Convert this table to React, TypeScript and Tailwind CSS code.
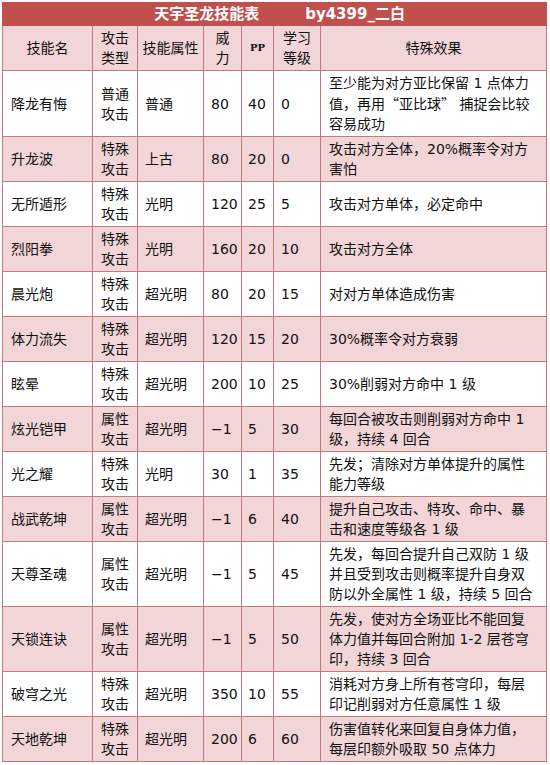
const cjk = (t: string) => <span className="[font-family:'Noto_Sans_CJK_SC',sans-serif]">{t}</span>;

const skills = [
  { name: '降龙有悔', type: '普通', attr: '普通', power: '80', pp: '40', lv: '0', effect: ['至少能为对方亚比保留 1 点体力', <>值，再用{cjk('“')}亚比球{cjk('”')} 捕捉会比较</>, '容易成功'], h: 'h-[66px]' },
  { name: '升龙波', type: '特殊', attr: '上古', power: '80', pp: '20', lv: '0', effect: ['攻击对方全体，20%概率令对方', '害怕'], h: 'h-[45px]' },
  { name: '无所遁形', type: '特殊', attr: '光明', power: '120', pp: '25', lv: '5', effect: ['攻击对方单体，必定命中'], h: 'h-[45px]' },
  { name: '烈阳拳', type: '特殊', attr: '光明', power: '160', pp: '20', lv: '10', effect: ['攻击对方全体'], h: 'h-[45px]' },
  { name: '晨光炮', type: '特殊', attr: '超光明', power: '80', pp: '20', lv: '15', effect: ['对对方单体造成伤害'], h: 'h-[45px]' },
  { name: '体力流失', type: '特殊', attr: '超光明', power: '120', pp: '15', lv: '20', effect: ['30%概率令对方衰弱'], h: 'h-[45px]' },
  { name: '眩晕', type: '特殊', attr: '超光明', power: '200', pp: '10', lv: '25', effect: ['30%削弱对方命中 1 级'], h: 'h-[45px]' },
  { name: '炫光铠甲', type: '属性', attr: '超光明', power: '−1', pp: '5', lv: '30', effect: ['每回合被攻击则削弱对方命中 1', '级，持续 4 回合'], h: 'h-[45px]' },
  { name: '光之耀', type: '特殊', attr: '光明', power: '30', pp: '1', lv: '35', effect: ['先发；清除对方单体提升的属性', '能力等级'], h: 'h-[45px]' },
  { name: '战武乾坤', type: '属性', attr: '超光明', power: '−1', pp: '6', lv: '40', effect: ['提升自己攻击、特攻、命中、暴', '击和速度等级各 1 级'], h: 'h-[45px]' },
  { name: '天尊圣魂', type: '属性', attr: '超光明', power: '−1', pp: '5', lv: '45', effect: ['先发，每回合提升自己双防 1 级', '并且受到攻击则概率提升自身双', '防以外全属性 1 级，持续 5 回合'], h: 'h-[65px]' },
  { name: '天锁连诀', type: '属性', attr: '超光明', power: '−1', pp: '5', lv: '50', effect: ['先发，使对方全场亚比不能回复', '体力值并每回合附加 1-2 层苍穹', '印，持续 3 回合'], h: 'h-[65px]' },
  { name: '破穹之光', type: '特殊', attr: '超光明', power: '350', pp: '10', lv: '55', effect: ['消耗对方身上所有苍穹印，每层', '印记削弱对方任意属性 1 级'], h: 'h-[45px]' },
  { name: '天地乾坤', type: '特殊', attr: '超光明', power: '200', pp: '6', lv: '60', effect: ['伤害值转化来回复自身体力值，', '每层印额外吸取 50 点体力'], h: 'h-[45px]' },
];

const cell = 'border border-[#c27a7e] align-middle leading-[20px] whitespace-nowrap';

export default function App() {
  return (
    <div className="w-[550px] h-[765px] bg-white pt-[2px] pl-[2px] text-[14px] text-[#111] [font-family:'DejaVu_Sans','Noto_Sans_CJK_SC',sans-serif]">
      <table className="table-fixed border-collapse w-[544px]">
        <colgroup>
          <col className="w-[90px]" />
          <col className="w-[45px]" />
          <col className="w-[66px]" />
          <col className="w-[38px]" />
          <col className="w-[32px]" />
          <col className="w-[47px]" />
          <col className="w-[226px]" />
        </colgroup>
        <thead>
          <tr className="h-[23px] bg-[#c0504d]">
            <th colSpan={7} className="border border-[#c0504d] text-white font-bold text-[15px] leading-[22px] text-center">
              <span className="pl-[10px]">天宇圣龙技能表</span><span className="inline-block w-[46px]" />by4399_二白
            </th>
          </tr>
          <tr className="h-[45px] bg-[#f2d5d6] font-normal">
            <th className={`${cell} font-normal text-center`}>技能名</th>
            <th className={`${cell} font-normal text-center`}>攻击<br />类型</th>
            <th className={`${cell} font-normal text-center`}>技能属性</th>
            <th className={`${cell} font-normal text-center`}>威<br />力</th>
            <th className={`${cell} font-bold text-center text-[10px] [font-family:'DejaVu_Serif',serif]`}>PP</th>
            <th className={`${cell} font-normal text-center`}>学习<br />等级</th>
            <th className={`${cell} font-normal text-center`}>特殊效果</th>
          </tr>
        </thead>
        <tbody>
          {skills.map((s, i) => (
            <tr key={s.name} className={`${s.h} ${i % 2 === 1 ? 'bg-[#f2d5d6]' : 'bg-white'}`}>
              <td className={`${cell} pl-[8px]`}>{s.name}</td>
              <td className={`${cell} text-center`}>{s.type}<br />攻击</td>
              <td className={`${cell} pl-[7px]`}>{s.attr}</td>
              <td className={`${cell} pl-[7px]`}>{s.power}</td>
              <td className={`${cell} pl-[6px]`}>{s.pp}</td>
              <td className={`${cell} pl-[7px]`}>{s.lv}</td>
              <td className={`${cell} pl-[8px]`}>
                {s.effect.map((line, j) => (
                  <div key={j}>{line}</div>
                ))}
              </td>
            </tr>
          ))}
        </tbody>
      </table>
    </div>
  );
}
